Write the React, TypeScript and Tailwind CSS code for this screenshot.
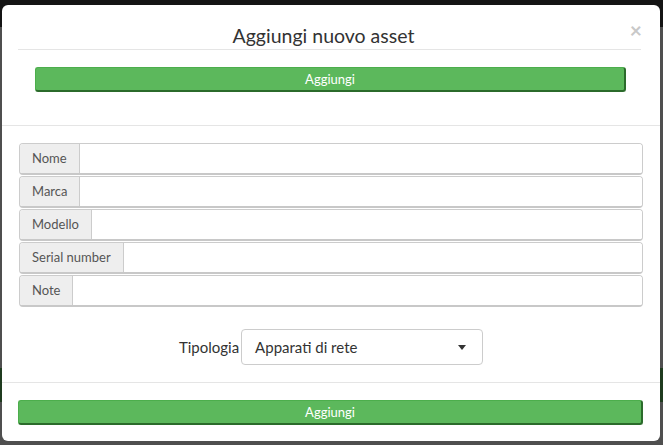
import React from "react";

function GreenButton({ className }: { className: string }) {
  return (
    <button
      className={`h-[25px] rounded-[3px] bg-[#5cb85c] border-l border-t border-[#4cae4c] border-r-2 border-b-2 border-r-[#2b6b2b] border-b-[#2b6b2b] text-white text-[13px] leading-[20px] ${className}`}
    >
      Aggiungi
    </button>
  );
}

function Row({ label }: { label: string }) {
  return (
    <div className="flex h-[32px] mb-[1px] rounded-[4px] border border-[#ccc] border-b-2 border-b-[#c8c8c8] overflow-hidden">
      <div className="bg-[#eee] border-r border-[#ccc] px-[12px] flex items-center text-[13px] text-[#555]">
        {label}
      </div>
      <div className="flex-1 bg-white" />
    </div>
  );
}

export default function App() {
  return (
    <div
      className="relative w-[663px] h-[445px] overflow-hidden"
      style={{ fontFamily: "Lato, 'Open Sans', sans-serif" }}
    >
      <div className="flex flex-col h-full">
        <div className="h-[27px] bg-[#141414]" />
        <div className="h-[341px] bg-[#4f4f4f]" />
        <div className="h-[34px] bg-[#1f3b1f]" />
        <div className="flex-1 bg-[#4f4f4f]" />
      </div>

      <div className="absolute left-[2px] top-[5px] w-[658px] h-[436px] bg-white rounded-[6px] flex flex-col">
        <div className="relative">
          <div className="ml-[16px] mr-[19px] pr-[12px] pt-[19px] pb-[1px] border-b border-[#e5e5e5] text-center text-[19.5px] leading-[24px] text-[#333]">
            Aggiungi nuovo asset
          </div>
          <div className="absolute right-[18px] top-[14px] text-[21px] font-bold leading-[21px] text-[#c8c8c8]">
            ×
          </div>
        </div>
        <div className="pt-[16px] pl-[33px] pr-[34px] h-[76px] border-b border-[#e5e5e5]">
          <GreenButton className="w-full" />
        </div>
        <div className="pt-[17px] pl-[17px] pr-[17px]">
          <Row label="Nome" />
          <Row label="Marca" />
          <Row label="Modello" />
          <Row label="Serial number" />
          <Row label="Note" />
        </div>
        <div className="flex justify-center items-center mt-[21px] h-[36px]">
          <span className="text-[15px] text-[#333] mr-[2px]">Tipologia</span>
          <div className="w-[242px] h-[36px] rounded-[4px] border border-[#ccc] flex items-center pl-[13px] pr-[16px] text-[15px] text-[#333]">
            <span className="flex-1">Apparati di rete</span>
            <span className="w-0 h-0 border-l-[4px] border-r-[4px] border-t-[5px] border-l-transparent border-r-transparent border-t-[#333]" />
          </div>
        </div>
        <div className="mt-[17px] border-t border-[#e5e5e5] pt-[16px] pl-[16px] pr-[17px]">
          <GreenButton className="w-full" />
        </div>
      </div>
    </div>
  );
}
